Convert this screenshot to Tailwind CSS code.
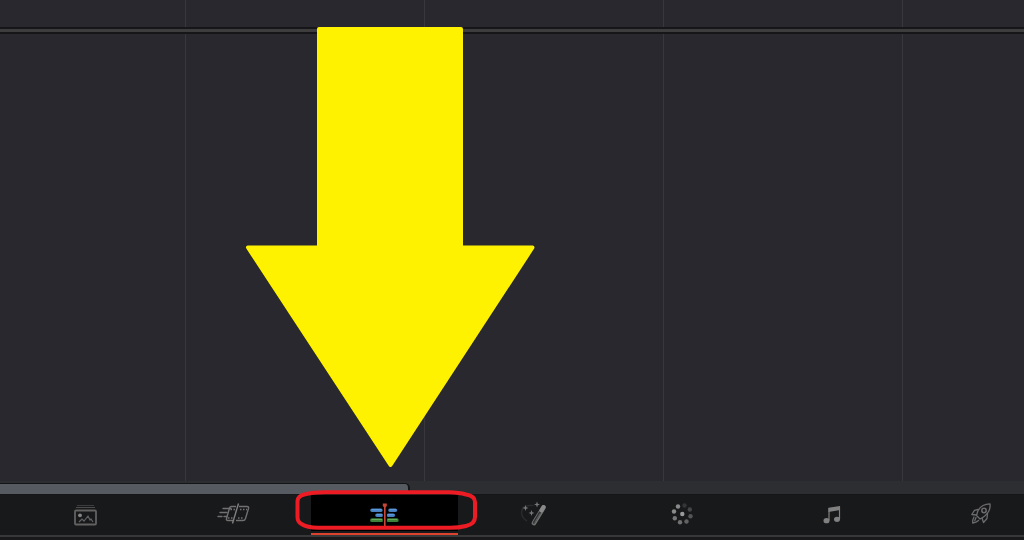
<!DOCTYPE html>
<html lang="en">
<head>
  <meta charset="UTF-8" />
  <meta name="viewport" content="width=device-width, initial-scale=1.0" />
  <title>Edit page</title>
  <script src="https://cdn.jsdelivr.net/npm/@tailwindcss/browser@4"></script>
</head>
<body class="relative flex h-screen flex-col overflow-hidden bg-[#29282e]">

  <!-- upper track -->
  <div class="flex h-[27px] shrink-0">
    <div class="w-[186px] shrink-0 border-r border-[#38373c]"></div>
    <div class="w-[239px] shrink-0 border-r border-[#38373c]"></div>
    <div class="w-[239px] shrink-0 border-r border-[#38373c]"></div>
    <div class="w-[239px] shrink-0 border-r border-[#38373c]"></div>
  </div>

  <div class="h-[7px] shrink-0 border-y-2 border-[#161618] bg-[#3d3d3d]"></div>

  <!-- main track -->
  <main class="flex min-h-0 flex-1">
    <div class="w-[186px] shrink-0 border-r border-[#38373c]"></div>
    <div class="w-[239px] shrink-0 border-r border-[#38373c]"></div>
    <div class="w-[239px] shrink-0 border-r border-[#38373c]"></div>
    <div class="w-[239px] shrink-0 border-r border-[#38373c]"></div>
  </main>

  <!-- scrollbar -->
  <div class="flex h-[14px] shrink-0 border-b border-[#151617] bg-[#2d2e32] pt-[2px]">
    <div class="w-2/5 rounded-tr-[5px] border-t border-r-2 border-[#141517] bg-[#555b61]"></div>
  </div>

  <!-- page switcher -->
  <nav class="h-[40px] shrink-0 bg-[#18191b]">
    <div class="flex h-full w-[calc(100%+32px)] gap-[2px] pl-3">
      <button type="button" aria-label="Media" class="flex flex-1 justify-center">
        <svg class="h-[40px] w-[50px]" viewBox="1 0 50 40" fill="none" stroke="#626262">
          <path d="M17 10.500h17" stroke="#3c3c3c" />
          <path d="M16 12.500h19" stroke="#4c4c4c" />
          <rect x="15" y="15.500" width="21" height="14" rx="1" stroke-width="1.800" />
          <circle cx="20" cy="20.300" r="1.900" fill="#858585" stroke="none" />
          <path d="M19 27l3-3 2 2 4-5 2 4 1-1 2 3" stroke-width="1.200" />
        </svg>
      </button>
      <button type="button" aria-label="Cut" class="flex flex-1 justify-center">
        <svg class="h-[40px] w-[50px]" viewBox="0 0 50 40" fill="none" stroke="#707070" stroke-width="1.400">
          <path d="M13 13.500h8M10 17.500h7M14 21.500h3M8 21.500h4" stroke-linecap="round" />
          <path d="M26 11.500h-4.500q-1.500 0-2 1.500l-3 10.500q-.5 2 1.500 2h5M29 11.500h8q2 0 1.500 2l-3 10q-.6 2-2.500 2h-7" />
          <path d="M28.500 8.500l-6 20" stroke="#808080" />
          <path d="M20.500 14.500h5M30 14.500h7M18 23h5M28 23h6" stroke-width="1.500" stroke-dasharray="1.500 1.500" />
        </svg>
      </button>
      <button type="button" aria-label="Edit" aria-current="page" class="flex flex-1 flex-col">
        <span class="flex h-[36px] w-full justify-center bg-black">
          <svg class="h-[36px] w-[50px]" viewBox="0 0 50 36">
            <path d="M12 15.300h9M17 20.300h4.500M28.300 20.300h5M30 15.300h5.500" stroke="#477fbd" stroke-width="3.600" stroke-linecap="round" />
            <path d="M12 14.700h9M17 19.700h4.500M28.300 19.700h5M30 14.700h5.500" stroke="#649ee0" stroke-linecap="round" />
            <path d="M12 25.200h9.500M28.300 25.200h8.500" stroke="#3c8137" stroke-width="3.800" stroke-linecap="round" />
            <path d="M12 24.500h9.500M28.300 24.500h8.500" stroke="#62ac59" stroke-linecap="round" />
            <path d="M24.800 11v20" stroke="#000" stroke-width="4" />
            <path d="M24.800 11v20" stroke="#c94637" stroke-width="1.600" />
            <path d="M22.800 8.500h4v2.500l-1.500 1.500h-1l-1.500-1.500z" fill="#c94637" />
          </svg>
        </span>
        <span class="mt-[2px] h-[2px] w-full bg-[#db432e]"></span>
      </button>
      <button type="button" aria-label="Fusion" class="flex flex-1 justify-center">
        <svg class="h-[40px] w-[50px]" viewBox="-1 0 50 40" fill="none">
          <path d="M17 26q-5-3-5.500-8 0-7 8-7.500h4" stroke="#2a2b2d" stroke-width="1.500" />
          <path d="M33.500 12.500l-9.500 15.500" stroke="#707070" stroke-width="4.600" stroke-linecap="round" />
          <path d="M30 17.500l-6 10" stroke="#303132" stroke-width="2.400" stroke-linecap="round" />
          <path d="M30.200 18.500l-5.400 9" stroke="#606060" stroke-width="1" stroke-linecap="round" />
          <path d="M31.500 15.500l2-3.500" stroke="#8a8a8a" stroke-width="4" stroke-linecap="round" />
          <path d="M15.500 10l.8 2.200 2.200.8-2.200.8-.8 2.200-.8-2.200-2.200-.8 2.200-.8zM27 6.500l.8 2.200 2.200.8-2.200.8-.8 2.200-.8-2.200-2.200-.8 2.200-.8zM21.500 15l.8 2.200 2.200.8-2.200.8-.8 2.200-.8-2.200-2.200-.8 2.200-.8z" fill="#777" />
        </svg>
      </button>
      <button type="button" aria-label="Color" class="flex flex-1 justify-center">
        <svg class="h-[40px] w-[50px]" viewBox="0 0 50 40">
          <circle cx="20" cy="11.500" r="2.200" fill="#8a8a8a" />
          <circle cx="26.500" cy="10.500" r="2.200" fill="#343536" />
          <circle cx="31.800" cy="14.500" r="2.200" fill="#464646" />
          <circle cx="32.500" cy="21.200" r="2.200" fill="#555" />
          <circle cx="28.500" cy="26.500" r="2.200" fill="#626262" />
          <circle cx="22" cy="27.300" r="2.200" fill="#707070" />
          <circle cx="16.800" cy="23.300" r="2.200" fill="#777" />
          <circle cx="16" cy="16.500" r="2.200" fill="#8a8a8a" />
          <circle cx="24.300" cy="19" r="2.200" fill="#9a9a9a" />
        </svg>
      </button>
      <button type="button" aria-label="Fairlight" class="flex flex-1 justify-center">
        <svg class="h-[40px] w-[50px]" viewBox="0 0 50 40" fill="#808080">
          <path d="M20.500 12.800l11.500-1.700v4l-11.500 1.900z" />
          <path d="M21 13v12.500M31.500 11.500v12.500" stroke="#808080" stroke-width="1.200" />
          <ellipse cx="18.500" cy="25.700" rx="3" ry="2.600" />
          <ellipse cx="29" cy="24.300" rx="3" ry="2.600" />
        </svg>
      </button>
      <button type="button" aria-label="Deliver" class="flex flex-1 justify-center">
        <svg class="h-[40px] w-[50px]" viewBox="1 0 50 40" fill="none" stroke="#6c6c6c" stroke-width="1.300" stroke-linejoin="round" stroke-linecap="round">
          <path d="M20.500 20.500q1-7 6.500-10 3-1.500 7-1.700.5 4-1.300 7.500-2.700 5-8.700 7.700z" />
          <circle cx="28" cy="15.500" r="2.200" stroke-width="1.500" />
          <path d="M22 14.500l-3.500.8-2.700 4.200 4.700.5M31.500 18.500l-.5 5-3.500 4-1.500-4.500" />
          <path d="M18 22q-1.500 2.300-1.300 6 3.500-.3 5.800-2.500M20 22.500l-1.200 3" />
        </svg>
      </button>
    </div>
  </nav>
  <div class="h-[5px] shrink-0 border-t-2 border-[#383838] bg-[#19191b]"></div>

  <!-- callout arrow and highlight -->
  <svg class="pointer-events-none absolute top-0 left-0 h-[540px] w-[1024px]" viewBox="0 0 1024 540" fill="none" stroke-linejoin="round" aria-hidden="true">
    <path d="M319 29H461V247.500H532.500L390.500 465L248 247.500H319z" fill="#fff200" stroke="#fff200" stroke-width="4" />
    <path d="M325 492.300H449Q459 492.500 466 494.500Q475 496 475 502V517Q475 524 466 526Q459 527.800 450 527.800H318Q307 527.500 301.500 524Q297.500 522 297.500 517V501Q298 496 304 494.500Q313 492.300 325 492.300z" stroke="#ed1c24" stroke-width="4" />
  </svg>

</body>
</html>
